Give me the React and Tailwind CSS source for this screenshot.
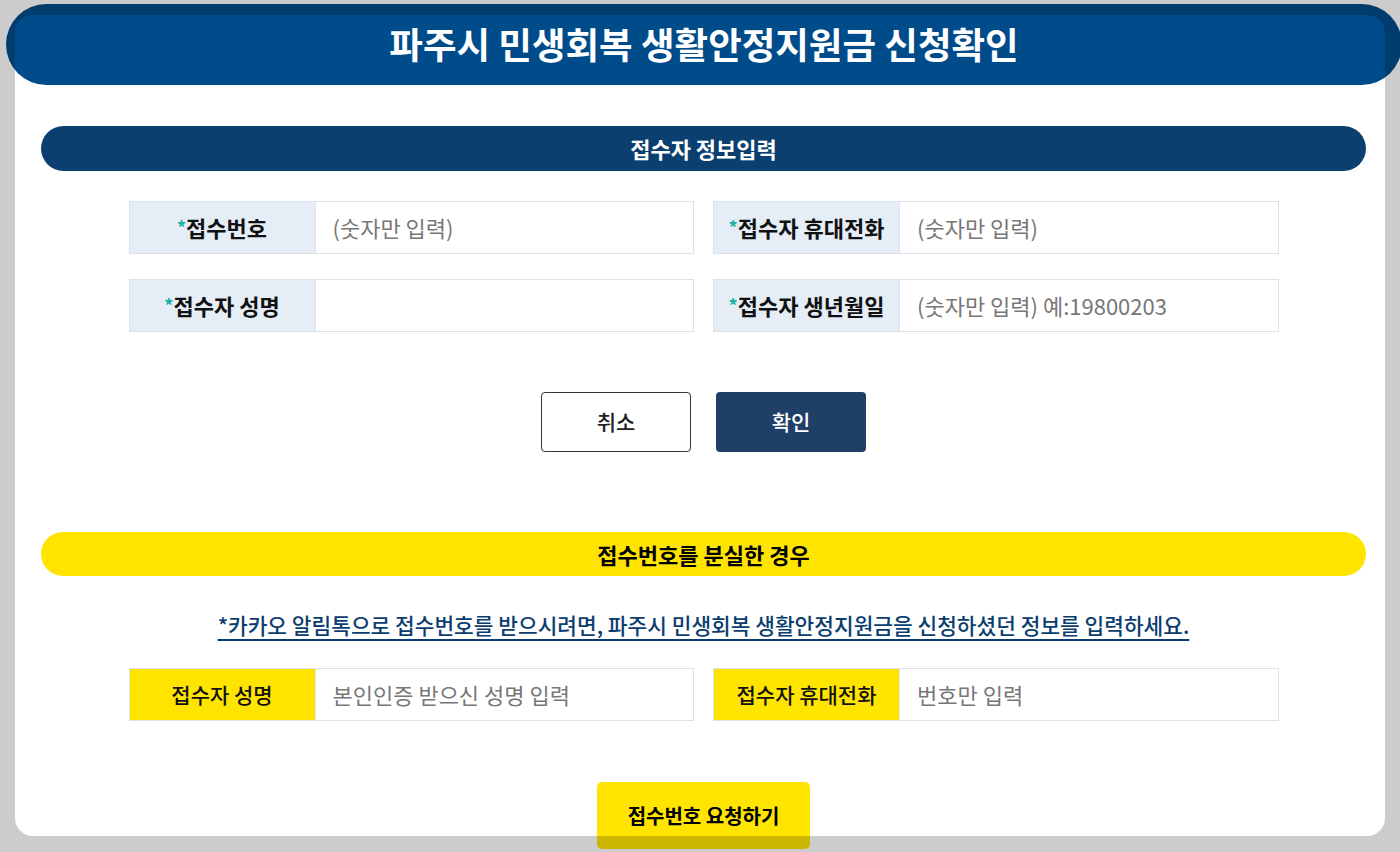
import React from "react"

const FONT = { fontFamily: '"Noto Sans CJK KR", "Noto Sans", sans-serif' }

const Field = ({ label, placeholder, required, yellow }) => (
    <div className="flex h-[53px] border border-[#dde2ea] bg-white">
        <div
            className={`w-[186px] shrink-0 flex items-center justify-center border-r border-[#dde2ea] text-[#111] ${
                yellow ? "bg-[#ffe400] font-medium text-[21px]" : "bg-[#e5edf7] font-bold text-[22px]"
            }`}
        >
            {required && <span className="text-[#18b3a0] text-[18px] font-bold align-[5px]">*</span>}
            <span>{label}</span>
        </div>
        <input
            className="flex-1 min-w-0 pl-[17px] bg-transparent text-[22px] text-[#333] placeholder:text-[#777] focus:outline-none"
            placeholder={placeholder}
        />
    </div>
)

const App = () => {
    return (
        <div className="relative w-full h-[852px] overflow-hidden bg-white" style={FONT}>
            {/* title bar */}
            <div className="ml-[6px] mt-[4px] w-[1396px] h-[81px] rounded-full bg-[#004b8a] flex items-center justify-center">
                <h1 className="text-white text-[36.5px] font-bold leading-none">파주시 민생회복 생활안정지원금 신청확인</h1>
            </div>

            <div className="pl-[7px] flex flex-col items-center">
                {/* 접수자 정보입력 */}
                <div className="mt-[41px] w-[1325px] h-[45px] rounded-full bg-[#0b3f6f] flex items-center justify-center">
                    <span className="text-white text-[22px] font-bold">접수자 정보입력</span>
                </div>

                <div className="mt-[30px] w-[1150px] grid grid-cols-2 gap-x-[19px] gap-y-[25px]">
                    <Field required label="접수번호" placeholder="(숫자만 입력)" />
                    <Field required label="접수자 휴대전화" placeholder="(숫자만 입력)" />
                    <Field required label="접수자 성명" placeholder="" />
                    <Field required label="접수자 생년월일" placeholder="(숫자만 입력) 예:19800203" />
                </div>

                <div className="mt-[60px] flex gap-[25px]">
                    <button className="w-[150px] h-[60px] rounded-[4px] border border-[#333] bg-white text-[21px] font-medium text-[#222]">
                        취소
                    </button>
                    <button className="w-[150px] h-[60px] rounded-[4px] bg-[#203f66] text-[21px] font-medium text-white">
                        확인
                    </button>
                </div>

                {/* 접수번호를 분실한 경우 */}
                <div className="mt-[80px] w-[1325px] h-[44px] rounded-full bg-[#ffe400] flex items-center justify-center">
                    <span className="text-black text-[22px] font-bold">접수번호를 분실한 경우</span>
                </div>

                <p className="mt-[34px] text-[21.4px] font-medium text-[#0b3d6f] underline underline-offset-[5px] leading-[30px]">
                    *카카오 알림톡으로 접수번호를 받으시려면, 파주시 민생회복 생활안정지원금을 신청하셨던 정보를 입력하세요.
                </p>

                <div className="mt-[28px] w-[1150px] grid grid-cols-2 gap-x-[19px]">
                    <Field yellow label="접수자 성명" placeholder="본인인증 받으신 성명 입력" />
                    <Field yellow label="접수자 휴대전화" placeholder="번호만 입력" />
                </div>

                <button className="mt-[61px] w-[213px] h-[67px] rounded-[5px] bg-[#ffe400] text-[20px] font-bold text-black">
                    접수번호 요청하기
                </button>
            </div>

            {/* dimmed frame around the modal window */}
            <div className="absolute left-[15px] top-[15px] w-[1370px] h-[821px] rounded-[18px] shadow-[0_0_0_2000px_rgba(0,0,0,0.2)] pointer-events-none z-10" />
        </div>
    )
}

export default App
